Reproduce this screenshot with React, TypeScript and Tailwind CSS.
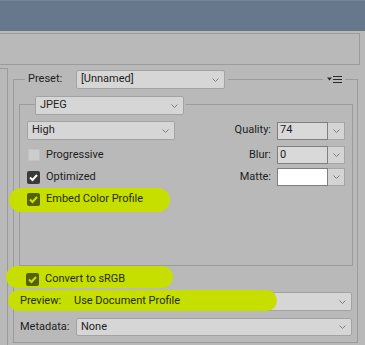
import React from 'react';

const line = 'border-[#9b9b9b]';

const Chevron = () => (
  <svg width="7" height="4" viewBox="0 0 7 4" className="shrink-0">
    <path d="M0.5 0.5 L3.5 3.5 L6.5 0.5" fill="none" stroke="#7e7e7e" strokeWidth="1" />
  </svg>
);

const Dropdown = ({ text, className, hl }: { text: string; className: string; hl?: boolean }) => (
  <div
    className={`flex items-center justify-between rounded-[2px] border border-[#a3a3a3] bg-[#d6d6d6] pl-[4px] pr-[5px] ${className}`}
  >
    <span className={hl ? 'relative z-20 text-[#262c00]' : ''}>{text}</span>
    <Chevron />
  </div>
);

const Field = ({ value, white }: { value: string; white?: boolean }) => (
  <div className="flex h-[18px] w-[68px]">
    <div
      className={`flex w-[51px] items-center border border-[#7f7f7f] pl-[2px] ${white ? 'bg-white' : 'bg-[#d9d9d9]'}`}
    >
      {value}
    </div>
    <div className="flex w-[17px] items-center justify-center border border-l-0 border-[#a5a5a5] bg-[#d4d4d4]">
      <Chevron />
    </div>
  </div>
);

const Check = ({ state }: { state: 'off' | 'on' | 'hl' }) => {
  if (state === 'off') {
    return <div className="h-[12px] w-[12px] border border-[#c2c2c2] bg-[#cdcdcd]" />;
  }
  const hl = state === 'hl';
  return (
    <div
      className={`relative flex h-[13px] w-[13px] items-center justify-center rounded-[2px] ${hl ? 'z-20 bg-[#55600a]' : 'bg-[#3a3a3a]'}`}
    >
      <svg width="11" height="11" viewBox="0 0 11 11">
        <path d="M2 5.5 L4.5 8 L9 3" fill="none" stroke={hl ? '#cce400' : '#ffffff'} strokeWidth="2" />
      </svg>
    </div>
  );
};

const MenuIcon = () => (
  <svg width="15" height="7" viewBox="0 0 15 7" className="mx-[4px] mr-[3px] shrink-0">
    <path d="M0 1.5 H5 L2.5 4.5 Z" fill="#2a2a2a" />
    <rect x="6" y="0" width="9" height="1" fill="#2a2a2a" />
    <rect x="6" y="3" width="9" height="1" fill="#2a2a2a" />
    <rect x="6" y="6" width="9" height="1" fill="#2a2a2a" />
  </svg>
);

export default function App() {
  return (
    <div className="relative h-[345px] w-[365px] overflow-hidden bg-[#b9b9b9] font-['Roboto',sans-serif] text-[11px] text-[#1e1e1e]">
      {/* highlighter marks */}
      <div className="absolute left-[9px] top-[188px] z-10 h-[24px] w-[161px] rounded-full bg-[#c6df00]" />
      <div className="absolute left-[6px] top-[266px] z-10 h-[22px] w-[167px] rounded-full bg-[#c6df00]" />
      <div className="absolute left-[8px] top-[290px] z-10 h-[21px] w-[269px] rounded-full bg-[#c6df00]" />

      <div className="h-[31px] border-t border-[#73839a] bg-[#68788c]" />
      <div className={`ml-[-1px] mt-[2px] h-[32px] w-[361px] border ${line}`} />

      <div className="mt-[3px] flex">
        <div className={`ml-[-1px] h-[290px] w-[9px] border-r border-t ${line}`} />

        <div className="ml-[5px] mt-[2px] w-[345px]">
          {/* preset header */}
          <div className="flex h-[19px] items-center">
            <div className={`h-[10px] w-[12px] self-end border-l border-t ${line}`} />
            <span className="w-[51px] pl-[3px]">Preset:</span>
            <Dropdown text="[Unnamed]" className="h-[19px] w-[149px]" />
            <div className="ml-[3px] h-px flex-1 bg-[#9b9b9b]" />
            <MenuIcon />
            <div className={`h-[10px] w-[13px] self-end border-r border-t ${line}`} />
          </div>

          <div className={`h-[254px] border-x border-b ${line} pl-[5px] pr-[4px] pt-[7px]`}>
            {/* JPEG group */}
            <div className="flex h-[19px] items-center">
              <div className={`h-[11px] w-[16px] self-end border-l border-t ${line}`} />
              <Dropdown text="JPEG" className="h-[19px] w-[149px]" />
              <div className={`ml-[2px] h-[11px] flex-1 self-end border-r border-t ${line}`} />
            </div>
            <div className={`h-[151px] border-x border-b ${line} pl-[7px] pr-[7px] pt-[6px]`}>
              <div className="flex h-[19px] items-center justify-between">
                <Dropdown text="High" className="h-[19px] w-[148px]" />
                <div className="flex items-center gap-[6px]">
                  <span>Quality:</span>
                  <Field value="74" />
                </div>
              </div>
              <div className="mt-[6px] flex h-[18px] items-center justify-between">
                <div className="ml-px flex items-center gap-[6px]">
                  <Check state="off" />
                  <span>Progressive</span>
                </div>
                <div className="flex items-center gap-[6px]">
                  <span>Blur:</span>
                  <Field value="0" />
                </div>
              </div>
              <div className="mt-[4px] flex h-[18px] items-center justify-between">
                <div className="flex items-center gap-[6px]">
                  <Check state="on" />
                  <span>Optimized</span>
                </div>
                <div className="flex items-center gap-[6px]">
                  <span>Matte:</span>
                  <Field value="" white />
                </div>
              </div>
              <div className="mt-[4px] flex h-[18px] items-center gap-[6px]">
                <Check state="hl" />
                <span className="relative z-20 text-[#262c00]">Embed Color Profile</span>
              </div>
            </div>

            <div className="mt-[4px] flex h-[18px] items-center gap-[6px] pl-[7px]">
              <Check state="hl" />
              <span className="relative z-20 text-[#262c00]">Convert to sRGB</span>
            </div>
            <div className="mt-[4px] flex h-[19px] items-center pr-px">
              <span className="relative z-20 w-[50px] pl-px text-[#262c00]">Preview:</span>
              <Dropdown text="Use Document Profile" className="h-[19px] flex-1" hl />
            </div>
            <div className="mt-[7px] flex h-[18px] items-center pr-px">
              <span className="w-[57px] pl-px">Metadata:</span>
              <Dropdown text="None" className="h-[18px] flex-1" />
            </div>
          </div>
        </div>
      </div>
    </div>
  );
}
